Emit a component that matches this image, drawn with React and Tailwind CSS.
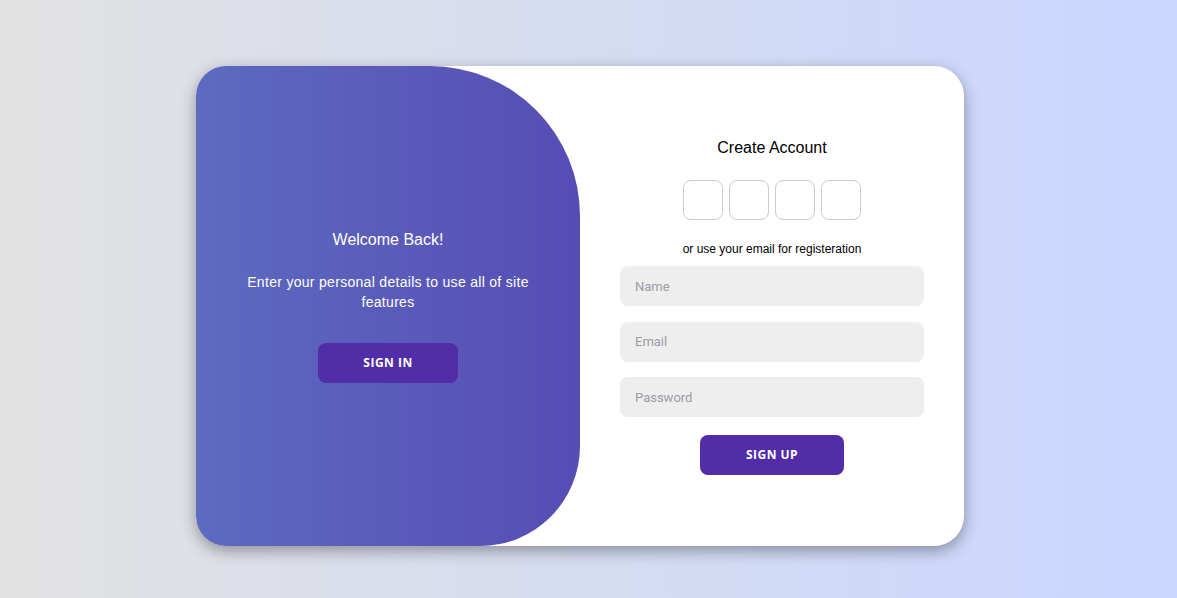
export default function App() {
  const inputs = ['Name', 'Email', 'Password']

  return (
    <div className="h-[598px] w-full overflow-hidden bg-gradient-to-r from-[#e2e2e2] to-[#c9d6ff] font-['Liberation_Sans',Arial,sans-serif]">
      <div className="w-[1160px] h-[612px] flex items-center justify-center">
        <div className="flex w-[768px] h-[480px] bg-white rounded-[30px] overflow-hidden shadow-[0_5px_15px_rgba(0,0,0,0.35)]">

          {/* Toggle panel */}
          <div className="w-1/2 h-full flex flex-col items-center justify-center px-[30px] text-center text-white bg-gradient-to-r from-[#5c6bc0] to-[#574cb4] rounded-tr-[150px] rounded-br-[100px]">
            <h1 className="text-[16px] leading-[20px]">Welcome Back!</h1>
            <p className="mt-[22px] text-[14px] leading-[20px] tracking-[0.3px]">
              Enter your personal details to use all of site features
            </p>
            <button className="mt-[31px] w-[140px] h-[40px] rounded-[8px] bg-[#512da8] text-white text-[12px] font-bold tracking-[0.5px] uppercase font-['Open_Sans',sans-serif]">
              Sign In
            </button>
          </div>

          {/* Sign up form */}
          <div className="w-1/2 h-full flex flex-col items-center justify-center px-10">
            <h1 className="translate-y-[1px] text-[16px] leading-[20px] text-black">Create Account</h1>
            <div className="mt-[23px] flex gap-[6px]">
              {[0, 1, 2, 3].map(i => (
                <div key={i} className="w-[40px] h-[40px] rounded-[8px] border border-[#ccc]" />
              ))}
            </div>
            <span className="mt-[21px] text-[12px] leading-[16px] text-black">or use your email for registeration</span>
            <div className="mt-[9px] w-full flex flex-col gap-[15.5px]">
              {inputs.map(p => (
                <input
                  key={p}
                  placeholder={p}
                  className="w-full h-[40px] rounded-[8px] bg-[#eee] px-[15px] text-[13px] font-['Roboto',sans-serif] outline-none placeholder:text-[#9a9ca6]"
                />
              ))}
            </div>
            <button className="mt-[18px] w-[144px] h-[40px] rounded-[8px] bg-[#512da8] text-white text-[12px] font-bold tracking-[0.5px] uppercase font-['Open_Sans',sans-serif]">
              Sign Up
            </button>
          </div>
        </div>
      </div>
    </div>
  )
}
